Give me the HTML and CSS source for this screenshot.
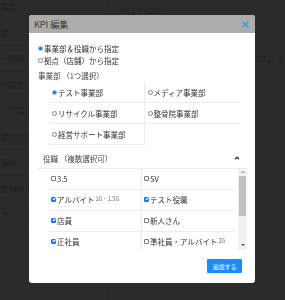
FILE: index.html
```html
<!DOCTYPE html>
<html lang="ja">
<head>
    <meta charset="UTF-8">
    <meta name="viewport" content="width=device-width, initial-scale=1.0">
    <title>KPI 編集</title>
    <link rel="stylesheet" href="styles.css">
</head>
<body>
    <div class="page">
        <aside class="sidebar">
            <div class="side-item">設定</div>
            <div class="side-item">定</div>
            <div class="side-item">ー管理</div>
            <div class="side-item">グ設定</div>
            <div class="side-item">ップ設定</div>
            <div class="side-item">定(PSR)</div>
            <div class="side-item">連絡</div>
            <div class="side-item">登録状況</div>
            <div class="side-item">力</div>
        </aside>
        <main class="main">
            <h2 class="main-title">KPI入力情報</h2>
            <div class="main-box"></div>
            <div class="main-note"><span>KPIの入力情報です。 ま</span></div>
            <div class="main-row"></div>
            <div class="main-row"></div>
        </main>
    </div>

    <div class="overlay">
        <div class="modal">
            <div class="modal-header">
                <span class="modal-title">KPI 編集</span>
                <svg class="modal-close" width="7" height="7" viewBox="0 0 7 7"><path d="M1 1 L6 6 M6 1 L1 6" stroke="#3a9ff0" stroke-width="1.6" stroke-linecap="round"/></svg>
            </div>

            <div class="modal-body">
                <label class="line"><input type="radio" name="mode" class="radio" checked>事業部＆役職から指定</label>
                <label class="line"><input type="radio" name="mode" class="radio">拠点（店舗）から指定</label>

                <div class="section-label">事業部 （1つ選択）</div>
                <div class="option-grid">
                    <label class="cell"><input type="radio" name="dept" class="radio" checked>テスト事業部</label>
                    <label class="cell"><input type="radio" name="dept" class="radio">メディア事業部</label>
                    <label class="cell"><input type="radio" name="dept" class="radio">リサイクル事業部</label>
                    <label class="cell"><input type="radio" name="dept" class="radio">整骨院事業部</label>
                    <label class="cell"><input type="radio" name="dept" class="radio">経営サポート事業部</label>
                </div>

                <div class="accordion-head">
                    <span>役職 （複数選択可）</span>
                    <svg class="chevron" width="6" height="4" viewBox="0 0 6 4"><path d="M1 3.2 L3 1.2 L5 3.2" fill="none" stroke="#333" stroke-width="1.3"/></svg>
                </div>
                <div class="role-box">
                    <div class="role-list">
                        <label class="cell"><input type="checkbox" class="check">3.5</label>
                        <label class="cell"><input type="checkbox" class="check">SV</label>
                        <label class="cell"><input type="checkbox" class="check" checked>アルバイト<small>1G・1.5G</small></label>
                        <label class="cell"><input type="checkbox" class="check" checked>テスト役職</label>
                        <label class="cell"><input type="checkbox" class="check" checked>店員</label>
                        <label class="cell"><input type="checkbox" class="check">新人さん</label>
                        <label class="cell"><input type="checkbox" class="check" checked>正社員</label>
                        <label class="cell"><input type="checkbox" class="check">準社員・アルバイト<small>2G</small></label>
                    </div>
                    <div class="scrollbar">
                        <span class="arrow up"></span>
                        <span class="thumb"></span>
                        <span class="arrow down"></span>
                    </div>
                </div>
            </div>

            <div class="modal-footer">
                <button class="add-button">追加する</button>
            </div>
        </div>
    </div>
</body>
</html>
```

FILE: styles.css
```css
body {
    margin: 0;
    font-family: "Noto Sans CJK JP", "Noto Sans", sans-serif;
    background-color: #fff;
    color: #333;
    overflow: hidden;
}

/* page behind the modal */
.page {
    display: flex;
    height: 300px;
}

.sidebar {
    width: 108px;
    margin-top: -6px;
    border-right: 1px solid #eee;
}

.side-item {
    height: 25px;
    line-height: 25px;
    border-bottom: 1px solid #e6e6e6;
    font-size: 8px;
    color: #c4c4c4;
    padding-left: 1px;
}

.main {
    flex: 1;
    min-width: 0;
    padding: 5px 0 0 8px;
    overflow: hidden;
    color: #c4c4c4;
}

.main-title {
    margin: 0;
    font-size: 8px;
    font-weight: normal;
    line-height: 14px;
}

.main-box {
    height: 20px;
    border-bottom: 1px solid #eee;
}

.main-note {
    display: flex;
    justify-content: flex-end;
    margin: 14px 0 0;
    font-size: 8px;
    line-height: 10px;
    white-space: nowrap;
}

.main-row {
    height: 80px;
    border-bottom: 1px solid #eee;
}

/* modal */
.overlay {
    position: fixed;
    inset: 0;
    background: rgba(0, 0, 0, 0.83);
    padding-top: 15px;
}

.modal {
    width: 226px;
    height: 268px;
    margin-left: 29px;
    background: #fff;
    border-radius: 3px;
    overflow: hidden;
    display: flex;
    flex-direction: column;
}

.modal-header {
    height: 18px;
    background: #acacac;
    display: flex;
    align-items: center;
    justify-content: space-between;
    padding: 0 6px 0 5px;
}

.modal-title {
    font-size: 9px;
    color: #3a3a3a;
}

.modal-body {
    flex: 1;
    padding: 9px 8px 0 9px;
    font-size: 7.5px;
}

.line {
    display: flex;
    align-items: center;
    height: 12px;
}

.radio,
.check {
    appearance: none;
    box-sizing: border-box;
    width: 5px;
    height: 5px;
    margin: 0 1px 0 0;
    flex: none;
    position: relative;
    background: #fff;
}

.radio {
    border: 1px solid #888;
    border-radius: 50%;
}

.radio:checked {
    border-color: #8dbcf6;
    background: #1a73e8;
}

.check {
    border: 1px solid #777;
    border-radius: 1px;
}

.check:checked {
    border-color: #1a73e8;
    background: #1a73e8;
}

.check:checked::after {
    content: "";
    position: absolute;
    left: 0.8px;
    top: -0.5px;
    width: 1px;
    height: 2.2px;
    border: solid #fff;
    border-width: 0 0.9px 0.9px 0;
    transform: rotate(45deg);
}

.section-label {
    margin-top: 4px;
    height: 12px;
    line-height: 12px;
    color: #444;
}

.option-grid,
.role-list {
    display: grid;
    grid-template-columns: 1fr 1fr;
}

.option-grid {
    margin: 0 7px 0 11px;
}

.cell {
    display: flex;
    align-items: center;
    height: 21px;
    padding: 1px 0 0 3px;
    box-sizing: border-box;
    border-bottom: 1px solid #ececec;
    white-space: nowrap;
}

.cell:nth-child(odd) {
    border-right: 1px solid #ececec;
}

.cell small {
    font-size: 5.5px;
    color: #666;
    margin-left: 1px;
}

.accordion-head {
    display: flex;
    justify-content: space-between;
    align-items: center;
    height: 12px;
    margin: 7px 0 0;
    padding: 0 7px 0 5px;
    color: #444;
}

.role-box {
    display: flex;
    height: 81px;
    margin-top: 4px;
    border-top: 1px solid #ececec;
    overflow: hidden;
}

.role-list {
    flex: 1;
    padding: 0 3px 0 11px;
    align-content: start;
}

.role-list .cell {
    padding: 0 0 2px 2px;
}

.scrollbar {
    width: 9px;
    background: #f1f1f1;
    display: flex;
    flex-direction: column;
    align-items: center;
}

.thumb {
    width: 7px;
    height: 40px;
    margin: 1px 0 auto;
    background: #c1c1c1;
}

.arrow {
    width: 0;
    height: 0;
    border-left: 2px solid transparent;
    border-right: 2px solid transparent;
    margin: 2px 0;
}

.arrow.up {
    border-bottom: 2px solid #a3a3a3;
}

.arrow.down {
    border-top: 2px solid #505050;
    margin-bottom: 4px;
}

.modal-footer {
    display: flex;
    justify-content: flex-end;
    padding: 0 13px 10px 0;
}

.add-button {
    width: 35px;
    height: 14px;
    padding: 0;
    border: none;
    border-radius: 1px;
    background: #1a8cff;
    color: #fff;
    font-family: inherit;
    font-size: 6px;
}
```
